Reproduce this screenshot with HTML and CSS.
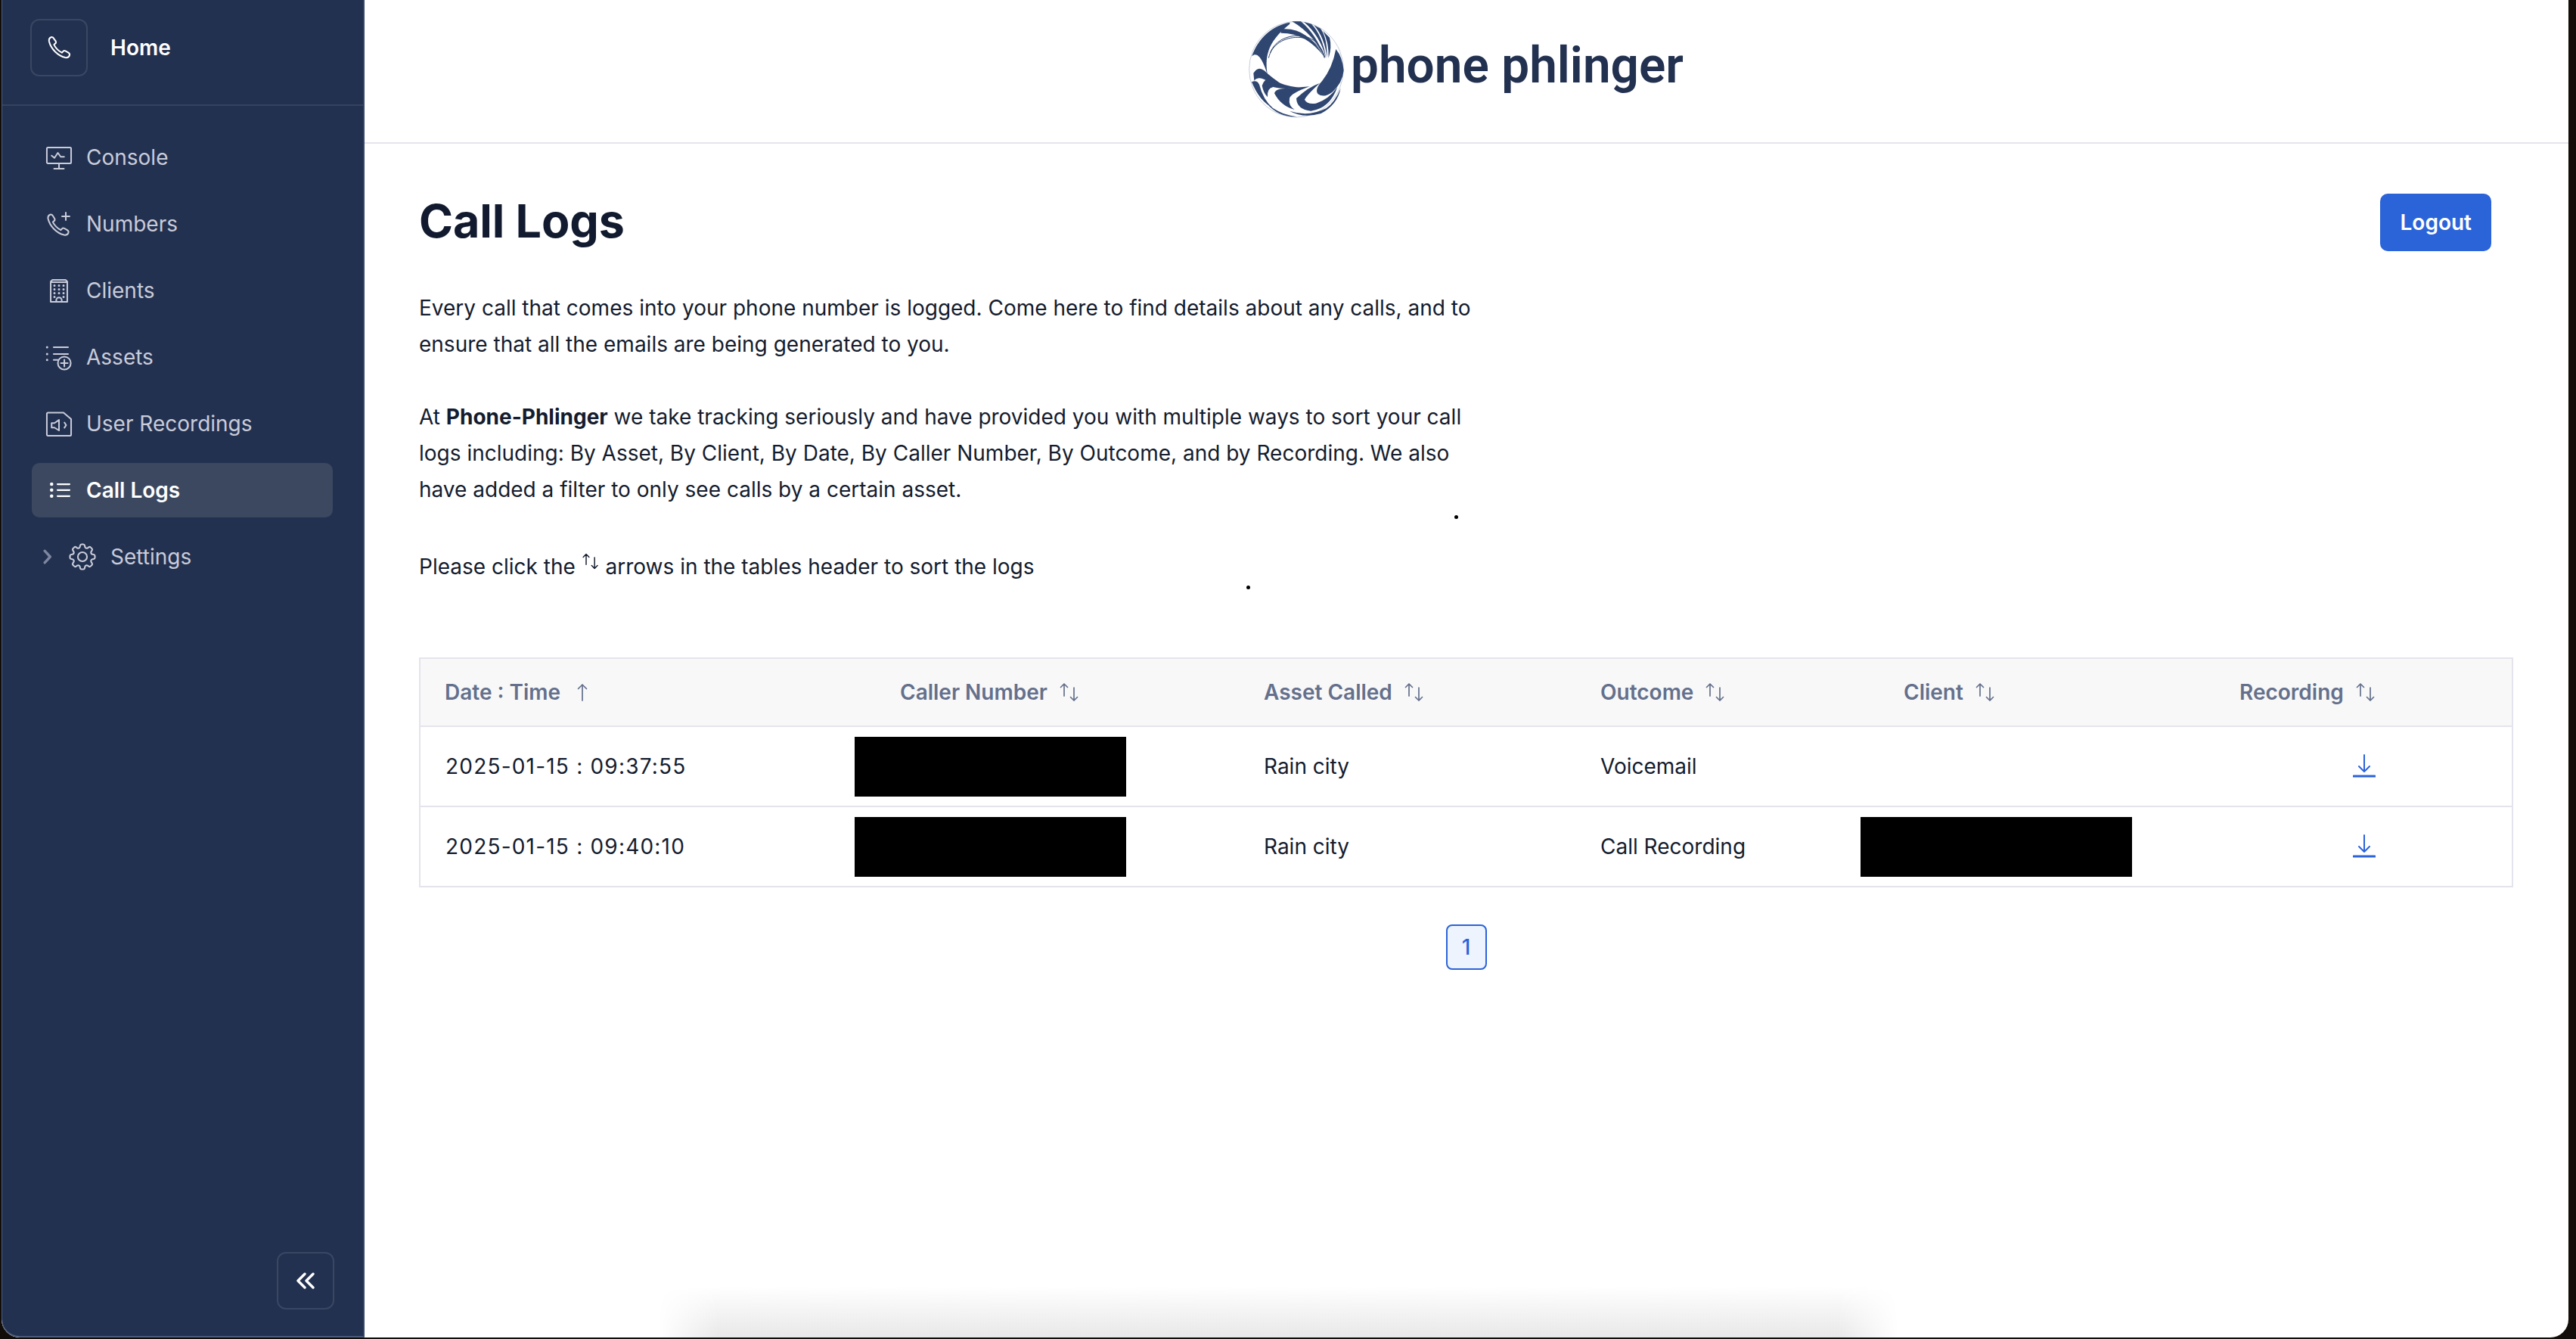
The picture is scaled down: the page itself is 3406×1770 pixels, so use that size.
FILE: index.html
```html
<!DOCTYPE html>
<html lang="en">
<head>
<meta charset="utf-8">
<title>Call Logs</title>
<link rel="stylesheet" href="styles.css">
</head>
<body>
<div class="app">
  <aside class="sidebar">
    <div class="side-head">
      <span class="home-box">
        <svg class="ico ico-home" viewBox="0 0 24 24"><path d="M5 2.8C3.8 3.3 2.9 4.5 3.3 6.5 4.8 13 11 19.2 17.5 20.7c2 .4 3.2-.6 3.7-1.7.4-1 .1-2-.9-2.6l-2.6-1.5c-.8-.4-1.6-.2-2.1.4l-1 1.1c-3-1.5-5.5-4-7-7l1.1-1c.6-.5.8-1.3.4-2.1L7.6 4.200C7 3 6 2.400 5 2.800Z"/></svg>
      </span>
      <span class="home-label">Home</span>
    </div>
    <nav class="nav">
      <a class="nav-item">
        <svg class="ico" viewBox="0 0 24 24"><rect x="1.300" y="3.300" width="21.400" height="14" rx="1"/><path d="M12 17.300v4.700M7.700 22h8.600M5.500 10.500l2.500 2 3-4.500 2.500 3.500h3"/></svg>
        <span>Console</span>
      </a>
      <a class="nav-item">
        <svg class="ico" viewBox="0 0 24 24"><path d="M4.200 3.800C3 4.300 2 5.500 2.400 7.500 3.900 14 10 20.200 16.500 21.700c2 .4 3.200-.6 3.700-1.700.4-1 .1-2-.9-2.600l-2.600-1.500c-.8-.4-1.600-.2-2.100.4l-1 1.100c-3-1.500-5.500-4-7-7l1.100-1c.6-.5.800-1.300.4-2.100L6.800 5.200c-.6-1.200-1.600-1.800-2.600-1.400ZM18 2v6.600M14.700 5.300h6.600"/></svg>
        <span>Numbers</span>
      </a>
      <a class="nav-item">
        <svg class="ico" viewBox="0 0 24 24"><path d="M4.700 22V4.200L6.200 2.700h11.600l1.500 1.500V22ZM4.700 4.700h14.600M9.600 22v-1.500a2.400 2.400 0 0 1 4.800 0V22"/><path class="dots" d="M8 7.700h.01M12 7.700h.01M16 7.700h.01M8 11h.01M12 11h.01M16 11h.01M8 14.300h.01M12 14.300h.01M16 14.300h.01M8 17.600h.01M16 17.600h.01"/></svg>
        <span>Clients</span>
      </a>
      <a class="nav-item">
        <svg class="ico" viewBox="0 0 24 24"><path d="M7.300 3.300H20M7.300 9.300H20M7.300 14.500H11"/><path class="dots" d="M1.500 3.300h.01M1.500 9.300h.01M1.500 14.500h.01"/><circle cx="16.700" cy="17.300" r="5.700"/><path d="M16.700 14.300v6M13.700 17.300h6"/></svg>
        <span>Assets</span>
      </a>
      <a class="nav-item">
        <svg class="ico" viewBox="0 0 24 24"><path d="M2.300 2.300H16l6.700 5.700v13.700a1 1 0 0 1-1 1H2.300a1 1 0 0 1-1-1V3.300a1 1 0 0 1 1-1Z"/><path d="M12 8.700 8 11.500H5.500v4H8l4 2.500ZM16.800 11l1.500 2.300-1.500 2.300"/></svg>
        <span>User Recordings</span>
      </a>
      <a class="nav-item nav-active">
        <svg class="ico" viewBox="0 0 24 24"><path d="M10.700 6.700h10.600M10.700 11.900h10.600M10.700 17.200h10.600"/><circle class="fill" cx="5.500" cy="6.700" r="1.500"/><circle class="fill" cx="5.500" cy="11.900" r="1.500"/><circle class="fill" cx="5.500" cy="17.200" r="1.500"/></svg>
        <span>Call Logs</span>
      </a>
      <a class="nav-item nav-sub">
        <svg class="chev" viewBox="0 0 12 18"><path d="m2.500 2 6.500 7-6.500 7"/></svg>
        <svg class="ico ico-gear" viewBox="0 0 24 24"><path d="M10.343 3.940c.09-.542.56-.94 1.110-.94h1.093c.55 0 1.020.398 1.110.94l.149.894c.07.424.384.764.78.93.398.164.855.142 1.205-.108l.737-.527a1.125 1.125 0 0 1 1.450.12l.773.774c.39.389.44 1.002.12 1.450l-.527.737c-.25.35-.272.806-.107 1.204.165.397.505.71.93.78l.893.15c.543.09.94.559.94 1.109v1.094c0 .55-.397 1.020-.94 1.110l-.894.149c-.424.07-.764.383-.929.78-.165.398-.143.854.107 1.204l.527.738c.32.447.269 1.060-.12 1.450l-.774.773a1.125 1.125 0 0 1-1.449.12l-.738-.527c-.35-.25-.806-.272-1.203-.107-.398.165-.71.505-.781.929l-.149.894c-.09.542-.56.94-1.110.94h-1.094c-.55 0-1.019-.398-1.110-.94l-.148-.894c-.071-.424-.384-.764-.781-.93-.398-.164-.854-.142-1.204.108l-.738.527c-.447.32-1.060.269-1.450-.12l-.773-.774a1.125 1.125 0 0 1-.12-1.450l.527-.737c.25-.35.272-.806.108-1.204-.165-.397-.506-.71-.93-.78l-.894-.15c-.542-.09-.94-.56-.94-1.109v-1.094c0-.55.398-1.020.94-1.110l.894-.149c.424-.07.765-.383.93-.78.165-.398.143-.854-.108-1.204l-.526-.738a1.125 1.125 0 0 1 .12-1.450l.773-.773a1.125 1.125 0 0 1 1.450-.12l.737.527c.35.25.807.272 1.204.107.397-.165.71-.505.78-.929l.15-.894Z"/><circle cx="12" cy="12" r="3.300"/></svg>
        <span>Settings</span>
      </a>
    </nav>
    <div class="side-foot">
      <button class="collapse" type="button" aria-label="Collapse">
        <svg viewBox="0 0 26 22"><path d="M12 2 3 11l9 9M23 2l-9 9 9 9"/></svg>
      </button>
    </div>
  </aside>

  <main class="main">
    <header class="topbar">
      <svg class="logo" viewBox="0 0 574 128">
        <g transform="translate(-12 -13) scale(.3333)">
          <ellipse class="r-rim" cx="222" cy="230" rx="187" ry="190"/>
          <path class="r-dark" d="M196 44C130 55 70 105 46 178 70 155 92 200 108 252 98 190 100 125 196 50Z"/>
          <path class="r-dark" d="M165 70Q265 62 333 180 260 84 160 86Z"/>
          <path class="r-dark" d="M205 40 240 40Q300 90 336 185 290 90 205 40ZM252 42 282 50Q325 95 340 185 315 95 252 42ZM292 55 318 68Q345 105 344 185 335 105 292 55ZM328 78 354 104Q364 140 350 185 352 125 328 78Z"/>
          <path class="r-thin" d="M112 185C125 130 175 103 228 103 280 104 318 135 334 185M118 165C135 120 180 96 232 96 282 98 318 128 336 182"/>
          <path class="r-dark" d="M379 150Q405 180 410 235 405 285 365 320 330 345 308 328 293 310 325 275 365 225 379 150Z"/>
          <path class="r-dark" d="M52 245Q70 215 95 235 125 265 178 298 120 285 95 270 70 258 55 275Z"/>
          <path class="r-dark" d="M86 295Q95 262 125 270 170 295 235 303 165 310 130 300 105 305 108 340 92 325 86 295Z"/>
          <path class="r-dark" d="M135 325Q140 305 185 305L275 298Q200 325 195 345 190 375 215 390 160 375 135 325Z"/>
          <path class="r-dark" d="M222 345Q270 300 315 285 265 330 255 350 265 370 300 365 350 350 385 300 355 385 280 395 225 390 222 345Z"/>
          <path class="r-dark" d="M195 395Q270 420 340 385 375 360 398 305 385 370 320 405 250 425 195 395Z"/>
          <path class="r-dark" d="M45 280Q65 270 75 290 90 350 130 385 75 355 45 280ZM105 365Q125 385 170 405 200 415 225 418 150 420 105 365Z"/>
        </g>
        <text class="logo-text" x="134" y="81" textLength="440" lengthAdjust="spacingAndGlyphs">phone phlinger</text>
      </svg>
    </header>

    <section class="content">
      <div class="title-row">
        <h1 class="title">Call Logs</h1>
        <button class="logout" type="button">Logout</button>
      </div>

      <div class="intro">
        <p>Every call that comes into your phone number is logged. Come here to find details about any calls, and to ensure that all the emails are being generated to you.</p>
        <p>At <strong>Phone-Phlinger</strong> we take tracking seriously and have provided you with multiple ways to sort your call logs including: By Asset, By Client, By Date, By Caller Number, By Outcome, and by Recording. We also have added a filter to only see calls by a certain asset.</p>
        <p class="intro-last">Please click the <svg class="sort sort-inline" viewBox="0 0 28 26"><path d="M7 18V2M2.500 6.500 7 2l4.500 4.500M20 7v17M15.500 19.500 20 24l4.500-4.500"/></svg> arrows in the tables header to sort the logs</p>
      </div>

      <div class="table">
        <div class="row row-head">
          <div class="cell">Date : Time <svg class="sort sort-up" viewBox="0 0 16 26"><path d="M8 24V3M2.500 8.500 8 3l5.500 5.500"/></svg></div>
          <div class="cell">Caller Number <svg class="sort" viewBox="0 0 28 26"><path d="M7 18V2M2.500 6.500 7 2l4.500 4.500M20 7v17M15.500 19.500 20 24l4.500-4.500"/></svg></div>
          <div class="cell">Asset Called <svg class="sort" viewBox="0 0 28 26"><path d="M7 18V2M2.500 6.500 7 2l4.500 4.500M20 7v17M15.500 19.500 20 24l4.500-4.500"/></svg></div>
          <div class="cell">Outcome <svg class="sort" viewBox="0 0 28 26"><path d="M7 18V2M2.500 6.500 7 2l4.500 4.500M20 7v17M15.500 19.500 20 24l4.500-4.500"/></svg></div>
          <div class="cell">Client <svg class="sort" viewBox="0 0 28 26"><path d="M7 18V2M2.500 6.500 7 2l4.500 4.500M20 7v17M15.500 19.500 20 24l4.500-4.500"/></svg></div>
          <div class="cell">Recording <svg class="sort" viewBox="0 0 28 26"><path d="M7 18V2M2.500 6.500 7 2l4.500 4.500M20 7v17M15.500 19.500 20 24l4.500-4.500"/></svg></div>
        </div>
        <div class="row">
          <div class="cell date">2025-01-15 : 09:37:55</div>
          <div class="cell"><span class="redact redact-caller"></span></div>
          <div class="cell">Rain city</div>
          <div class="cell">Voicemail</div>
          <div class="cell"></div>
          <div class="cell cell-dl"><svg class="dl" viewBox="0 0 30 32"><path d="M15 1v22M8 16l7 7 7-7"/><path class="dl-base" d="M1 29h28"/></svg></div>
        </div>
        <div class="row">
          <div class="cell date">2025-01-15 : 09:40:10</div>
          <div class="cell"><span class="redact redact-caller"></span></div>
          <div class="cell">Rain city</div>
          <div class="cell">Call Recording</div>
          <div class="cell"><span class="redact redact-client"></span></div>
          <div class="cell cell-dl"><svg class="dl" viewBox="0 0 30 32"><path d="M15 1v22M8 16l7 7 7-7"/><path class="dl-base" d="M1 29h28"/></svg></div>
        </div>
      </div>

      <div class="pager"><button class="page" type="button">1</button></div>
    </section>

    <span class="speck speck-a"></span>
    <span class="speck speck-b"></span>
    <div class="bottom-fade"></div>
  </main>
</div>
</body>
</html>
```

FILE: styles.css
```css
* { box-sizing: border-box; }
html, body { margin: 0; height: 100%; }
body {
  background: #120d08;
  padding: 0 10px 2px 2px;
  font-family: Inter, "Liberation Sans", sans-serif;
  font-size: 28px;
  color: #141c2e;
  overflow: hidden;
}
.app {
  display: flex;
  height: 100%;
  background: #fff;
  border-radius: 0 0 24px 24px;
  overflow: hidden;
}

/* Sidebar */
.sidebar {
  width: 480px;
  flex: none;
  display: flex;
  flex-direction: column;
  background: #233150;
  border-left: 1px solid #4d5c7c;
  border-bottom: 2px solid #4d5c7c;
  border-right: 2px solid #36456a;
  border-bottom-left-radius: 24px;
  color: #c9ccda;
}
.side-head {
  height: 140px;
  flex: none;
  display: flex;
  align-items: flex-start;
  gap: 30px;
  padding: 25px 0 0 37px;
  border-bottom: 2px solid #36435f;
}
.home-box {
  width: 76px;
  height: 76px;
  display: flex;
  align-items: center;
  justify-content: center;
  border: 2px solid #394763;
  border-radius: 12px;
}
.home-label { color: #fff; font-weight: 600; line-height: 76px; }
.ico {
  width: 36px;
  height: 36px;
  flex: none;
  fill: none;
  stroke: currentColor;
  stroke-width: 1.35;
  stroke-linecap: round;
  stroke-linejoin: round;
}
.ico-home { color: #fff; }
.ico .dots { stroke-width: 2; }
.ico .fill { fill: currentColor; stroke: none; }
.ico-gear { width: 44px; height: 44px; stroke-width: 1.15; }
.nav {
  display: flex;
  flex-direction: column;
  gap: 16px;
  padding: 32px 40px 0 39px;
}
.nav-item {
  height: 72px;
  display: flex;
  align-items: center;
  gap: 18px;
  padding: 0 0 0 18px;
  border-radius: 10px;
  line-height: 36px;
}
.nav-active { background: #3c4860; color: #fff; font-weight: 600; }
.nav-active .ico { stroke-width: 1.5; }
.nav-sub { padding-left: 14px; gap: 0; }
.nav-sub span { margin-left: 15px; }
.chev {
  width: 14px;
  height: 20px;
  margin-right: 17px;
  fill: none;
  stroke: #7e879f;
  stroke-width: 3;
  stroke-linecap: round;
  stroke-linejoin: round;
}
.side-foot {
  margin-top: auto;
  display: flex;
  justify-content: flex-end;
  padding: 0 38px 35px 0;
}
.collapse {
  width: 76px;
  height: 76px;
  display: flex;
  align-items: center;
  justify-content: center;
  padding: 0;
  background: none;
  border: 2px solid #394763;
  border-radius: 12px;
}
.collapse svg {
  width: 26px;
  height: 22px;
  fill: none;
  stroke: #fff;
  stroke-width: 3.4;
  stroke-linecap: round;
  stroke-linejoin: round;
}

/* Main */
.main {
  flex: 1;
  min-width: 0;
  position: relative;
  display: flex;
  flex-direction: column;
}
.topbar {
  height: 190px;
  flex: none;
  display: flex;
  justify-content: center;
  padding-top: 28px;
  border-bottom: 2px solid #e4e4ec;
}
.logo { width: 574px; height: 128px; display: block; overflow: visible; }
.r-dark { fill: #2f4671; }
.r-rim { fill: #fff; stroke: #8a99b5; stroke-width: 1.5; }
.r-thin { fill: none; stroke: #2f4671; stroke-width: 3; }
.logo-text {
  font-family: Roboto, "Liberation Sans", sans-serif;
  font-size: 66px;
  font-weight: 600;
  fill: #233150;
}
.content { padding: 66px 73px 0 72px; }
.title-row {
  display: flex;
  justify-content: space-between;
  align-items: flex-start;
  padding-right: 29px;
}
.title {
  margin: 0;
  font-size: 61px;
  line-height: 72px;
  font-weight: 700;
  letter-spacing: -0.1px;
  color: #111a2e;
}
.logout {
  height: 76px;
  padding: 0 26px 0 27px;
  border: 0;
  border-radius: 10px;
  background: #2b63d9;
  color: #fff;
  font: 600 28px Inter, "Liberation Sans", sans-serif;
}
.intro { width: 1400px; margin-top: 51px; line-height: 48px; }
.intro p { margin: 0 0 48px; }
.intro strong { font-weight: 700; }
.intro-last { padding-top: 6px; }
.sort {
  width: 28px;
  height: 26px;
  fill: none;
  stroke: currentColor;
  stroke-width: 1.7;
  stroke-linecap: round;
  stroke-linejoin: round;
  vertical-align: -3px;
  margin-left: 8px;
}
.sort-up { width: 16px; margin-left: 14px; }
.sort-inline { width: 24px; height: 24px; color: #141c2e; vertical-align: 5px; margin-left: 0; }

/* Table */
.table {
  margin-top: 96px;
  border: 2px solid #e4e4ec;
}
.row {
  display: grid;
  grid-template-columns: 602px 481px 445px 401px 444px 1fr;
  height: 106px;
  align-items: center;
  padding-left: 32px;
  border-top: 2px solid #e4e4ec;
}
.row-head {
  height: 88px;
  border-top: 0;
  background: #f8f8f8;
  font-weight: 600;
  color: #64708c;
}
.cell { white-space: nowrap; }
.date { letter-spacing: 1.2px; padding-left: 1px; }
.redact { display: block; height: 79px; background: #000; }
.redact-caller { width: 359px; margin-left: -60px; }
.redact-client { width: 359px; margin-left: -57px; }
.cell-dl { display: flex; padding-left: 150px; }
.dl {
  width: 30px;
  height: 32px;
  fill: none;
  stroke: #2b63d9;
  stroke-width: 2;
  stroke-linecap: round;
  stroke-linejoin: round;
}
.dl-base { stroke-width: 3; }

.pager { display: flex; justify-content: center; margin-top: 49px; }
.page {
  width: 54px;
  height: 60px;
  padding: 0;
  border: 2px solid #2b63d9;
  border-radius: 8px;
  background: #eef4fd;
  color: #2b63d9;
  font: 500 28px Inter, "Liberation Sans", sans-serif;
}

.speck {
  position: absolute;
  width: 5px;
  height: 5px;
  border-radius: 50%;
  background: #000;
}
.speck-a { left: 1441px; top: 681px; }
.speck-b { left: 1166px; top: 774px; }
.bottom-fade {
  position: absolute;
  left: 388px;
  bottom: 0;
  width: 1640px;
  height: 68px;
  background: linear-gradient(to top, #e8e8e8, #fff);
  -webkit-mask-image: linear-gradient(to right, transparent, #000 80px, #000 calc(100% - 80px), transparent);
  mask-image: linear-gradient(to right, transparent, #000 80px, #000 calc(100% - 80px), transparent);
}
```
